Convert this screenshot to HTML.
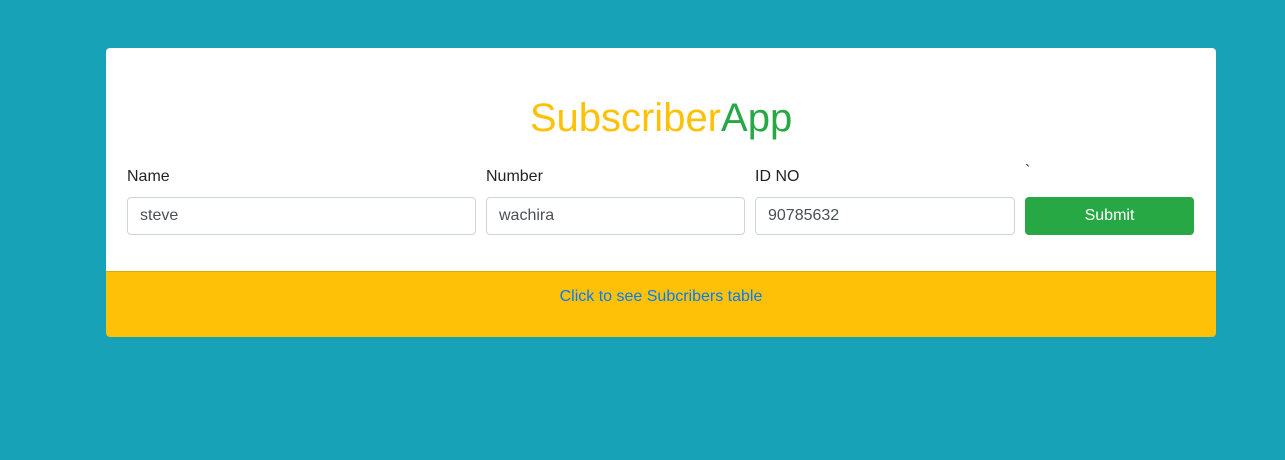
<!DOCTYPE html>
<html><head><style>
body{margin:0;background:#17a2b8;width:1285px;height:460px;font-family:"Liberation Sans",sans-serif;position:relative;overflow:hidden}
.card{position:absolute;left:106px;top:48px;width:1110px;height:223px;background:#fff;border-radius:4px 4px 0 0;border-bottom:1px solid #ddd}
.foot{position:absolute;left:106px;top:271px;width:1110px;height:66px;background:#ffc107;border-radius:0 0 4px 4px;border-top:1px solid #e0a800;box-sizing:border-box}
.foot a{position:absolute;left:0;right:0;top:16px;text-align:center;color:#007bff;font-size:16px}
h1{position:absolute;left:106px;width:1110px;top:95px;margin:0;text-align:center;font-size:40px;font-weight:normal;line-height:46px}
.lbl{position:absolute;top:168px;font-size:16px;color:#212529}
.in{position:absolute;top:197px;height:38px;box-sizing:border-box;border:1px solid #ced4da;border-radius:4px;font-size:16px;color:#495057;padding:8px 12px;line-height:20px}
.btn{position:absolute;left:1025px;top:197px;width:169px;height:38px;background:#28a745;border-radius:4px;color:#fff;font-size:16px;text-align:center;line-height:38px}
</style></head><body>
<div class="card"></div>
<h1><span style="color:#ffc107">Subscriber</span><span style="color:#28a745">App</span></h1>
<div class="lbl" style="left:127px">Name</div>
<div class="lbl" style="left:486px">Number</div>
<div class="lbl" style="left:755px">ID NO</div>
<div class="lbl" style="left:1025px;top:163px">`</div>
<div class="in" style="left:127px;width:349px">steve</div>
<div class="in" style="left:486px;width:259px">wachira</div>
<div class="in" style="left:755px;width:260px">90785632</div>
<div class="btn">Submit</div>
<div class="foot"><a>Click to see Subcribers table</a></div>
</body></html>
